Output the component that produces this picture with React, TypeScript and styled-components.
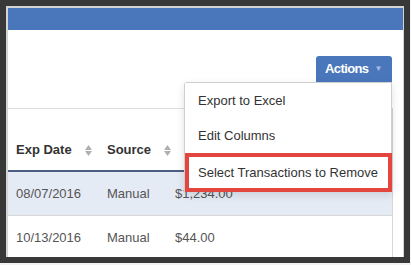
import React from 'react';
import styled, { createGlobalStyle } from 'styled-components';

const GlobalStyle = createGlobalStyle`
  html, body {
    margin: 0;
    padding: 0;
    background: #f2f2f2;
    font-family: 'Liberation Sans', Arial, sans-serif;
  }
`;

const rows = [
  { date: '08/07/2016', source: 'Manual', amount: '$1,234.00' },
  { date: '10/13/2016', source: 'Manual', amount: '$44.00' },
];

const menuItems = ['Export to Excel', 'Edit Columns', 'Select Transactions to Remove'];

const SortIcon = () => (
  <SortSvg width="7" height="11" viewBox="0 0 7 11">
    <polygon points="0,5 3.5,0 7,5" fill="#b0b0b0" />
    <polygon points="0,6 3.5,11 7,6" fill="#b0b0b0" />
  </SortSvg>
);

const App = () => {
  return (
    <>
      <GlobalStyle />
      <Frame>
        <Panel>
          <TopBar />
          <Toolbar>
            <ActionsWrap>
              <ActionsButton>
                Actions <Caret>▼</Caret>
              </ActionsButton>
              <Menu>
                {menuItems.map((item, i) => (
                  <MenuItem key={item} $highlighted={i === menuItems.length - 1}>
                    {item}
                  </MenuItem>
                ))}
              </Menu>
            </ActionsWrap>
          </Toolbar>
          <Table>
            <HeaderRow>
              <HeadCell>
                Exp Date
                <SortIcon />
              </HeadCell>
              <HeadCell>
                Source
                <SortIcon />
              </HeadCell>
              <HeadCell />
            </HeaderRow>
            {rows.map((row, i) => (
              <Row key={row.date} $shaded={i === 0}>
                <Cell>{row.date}</Cell>
                <Cell>{row.source}</Cell>
                <Cell>{row.amount}</Cell>
              </Row>
            ))}
          </Table>
        </Panel>
      </Frame>
    </>
  );
};

export default App;

const Frame = styled.div`
  box-sizing: border-box;
  width: 410px;
  height: 263px;
  border: 6px solid #383838;
  background: #d4d4d4;
  overflow: hidden;
`;

const Panel = styled.div`
  box-sizing: border-box;
  height: 100%;
  margin: 2px 1px 0 2px;
  background: #ffffff;
  display: flex;
  flex-direction: column;
`;

const TopBar = styled.div`
  height: 22px;
  background: #4a77bb;
  flex-shrink: 0;
`;

const Toolbar = styled.div`
  display: flex;
  justify-content: flex-end;
  padding: 26px 11px 26px 0;
  flex-shrink: 0;
  position: relative;
  z-index: 2;
`;

const ActionsWrap = styled.div`
  position: relative;
`;

const ActionsButton = styled.div`
  box-sizing: border-box;
  width: 76px;
  height: 26px;
  padding-left: 9px;
  background: #4a77bb;
  border-radius: 3px 3px 0 0;
  color: #ffffff;
  font-size: 13px;
  font-weight: bold;
  letter-spacing: -0.6px;
  line-height: 26px;
  display: flex;
  align-items: center;
  gap: 6px;
`;

const Caret = styled.span`
  font-size: 8px;
  color: #a9bde0;
  letter-spacing: 0;
  margin-top: -1px;
`;

const Menu = styled.div`
  position: absolute;
  top: 26px;
  right: 0;
  width: 208px;
  box-sizing: border-box;
  background: #ffffff;
  border: 1px solid #cfcfcf;
  border-bottom: none;
  border-radius: 3px 0 0 0;
  box-shadow: 0 3px 8px rgba(0, 0, 0, 0.12);
`;

const MenuItem = styled.div<{ $highlighted?: boolean }>`
  box-sizing: border-box;
  height: ${(p) => (p.$highlighted ? '39px' : '35px')};
  padding-left: ${(p) => (p.$highlighted ? '9px' : '13px')};
  margin: ${(p) => (p.$highlighted ? '0 -1px 0 0' : '0')};
  border: ${(p) => (p.$highlighted ? '4px solid #e2463e' : 'none')};
  display: flex;
  align-items: center;
  font-size: 13px;
  color: #333333;
  white-space: nowrap;
  background: #ffffff;
`;

const Table = styled.div`
  box-sizing: border-box;
  margin-right: 10px;
  border-top: 1px solid #dddddd;
  border-right: 1px solid #d6d6d6;
  flex: 1;
`;

const HeaderRow = styled.div`
  display: grid;
  grid-template-columns: 91px 68px 1fr;
  align-items: end;
  padding-bottom: 12px;
  box-sizing: border-box;
  border-bottom: 2px solid #4a5f80;
  height: 63px;
`;

const HeadCell = styled.div`
  display: flex;
  align-items: center;
  gap: 13px;
  padding-left: 8px;
  font-size: 13px;
  font-weight: bold;
  color: #333333;
  line-height: 16px;
  white-space: nowrap;
  min-width: 0;
  overflow: visible;
`;

const SortSvg = styled.svg`
  flex-shrink: 0;
`;

const Row = styled.div<{ $shaded?: boolean }>`
  display: grid;
  grid-template-columns: 91px 68px 1fr;
  height: 44px;
  box-sizing: border-box;
  align-items: center;
  background: ${(p) => (p.$shaded ? '#e5ebf5' : '#ffffff')};
  border-bottom: 1px solid #d8d8d8;
`;

const Cell = styled.div`
  padding-left: 8px;
  font-size: 13px;
  color: #555555;
  white-space: nowrap;
`;
